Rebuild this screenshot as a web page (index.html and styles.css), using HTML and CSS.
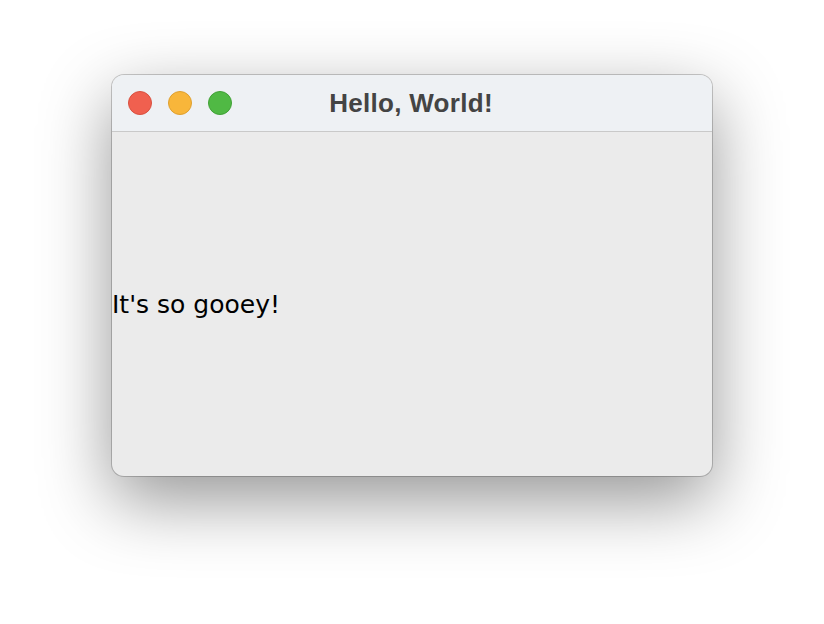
FILE: index.html
```html
<!DOCTYPE html>
<html>
<head>
<meta charset="utf-8">
<link rel="stylesheet" href="styles.css">
</head>
<body>
<div class="stage">
  <div class="window">
    <div class="titlebar">
      <div class="lights">
        <span class="light red"></span>
        <span class="light yellow"></span>
        <span class="light green"></span>
      </div>
      <div class="title">Hello, World!</div>
    </div>
    <div class="content">
      <span class="label">It's so gooey!</span>
    </div>
  </div>
</div>
</body>
</html>
```

FILE: styles.css
```css
html, body {
  margin: 0;
  padding: 0;
  background: #ffffff;
}
.stage {
  width: 824px;
  height: 624px;
  box-sizing: border-box;
  padding: 75px 0 0 112px;
}
.window {
  width: 600px;
  height: 401px;
  border-radius: 12px;
  overflow: hidden;
  display: flex;
  flex-direction: column;
  box-shadow: 0 0 0 1px rgba(0,0,0,0.2), 0 24px 70px rgba(0,0,0,0.42);
  background: #ebebeb;
}
.titlebar {
  height: 57px;
  flex: none;
  box-sizing: border-box;
  background: #eef1f4;
  border-bottom: 1px solid #c9c9c9;
  position: relative;
  display: flex;
  align-items: center;
  justify-content: center;
}
.lights {
  position: absolute;
  left: 16px;
  top: 16px;
  display: flex;
  gap: 16px;
}
.light {
  width: 24px;
  height: 24px;
  border-radius: 50%;
  box-sizing: border-box;
}
.red { background: #f0604f; border: 1px solid #d9503f; }
.yellow { background: #f8b63a; border: 1px solid #dfa02f; }
.green { background: #50b944; border: 1px solid #41a136; }
.title {
  font-family: "Liberation Sans", Arial, sans-serif;
  font-weight: bold;
  font-size: 26px;
  letter-spacing: 0.3px;
  color: #444444;
  margin-left: -2px;
}
.content {
  flex: 1;
  display: flex;
  align-items: center;
}
.label {
  font-family: "DejaVu Sans", sans-serif;
  font-size: 25px;
  color: #000000;
}
```
